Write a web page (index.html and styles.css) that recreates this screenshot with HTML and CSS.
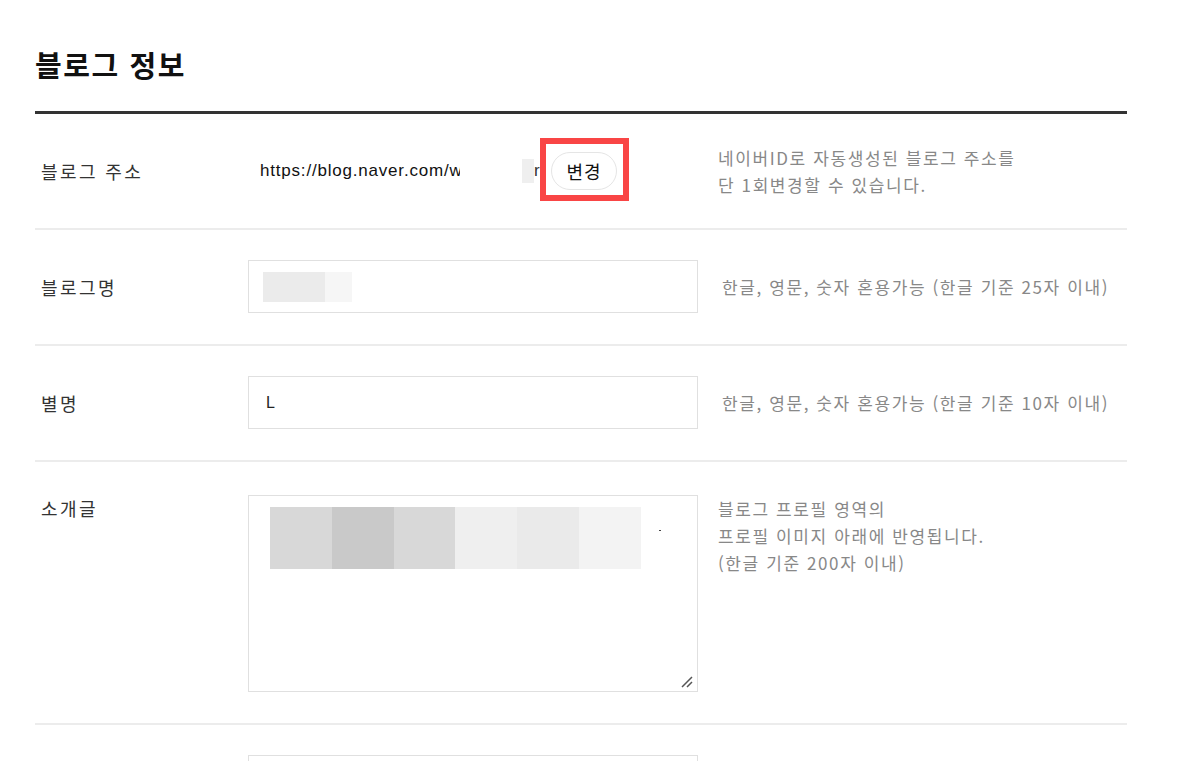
FILE: index.html
```html
<!DOCTYPE html>
<html lang="ko">
<head>
<meta charset="utf-8">
<title>블로그 정보</title>
<link rel="stylesheet" href="styles.css">
</head>
<body>
<main class="page">
  <h2 class="title">블로그 정보</h2>
  <div class="table">
    <div class="row center first">
      <div class="label">블로그 주소</div>
      <div class="field url-field">
        <span class="url">https://blog.naver.com/w</span>
        <span class="url-mask"></span>
        <span class="url-tail">r</span>
        <span class="btn-wrap">
          <button class="btn">변경</button>
          <span class="highlight"></span>
        </span>
      </div>
      <div class="help">네이버ID로 자동생성된 블로그 주소를<br>단 1회변경할 수 있습니다.</div>
    </div>
    <div class="row center">
      <div class="label">블로그명</div>
      <div class="field">
        <div class="input">
          <span class="mask m1"></span><span class="mask m2"></span>
        </div>
      </div>
      <div class="help wide">한글, 영문, 숫자 혼용가능 (한글 기준 25자 이내)</div>
    </div>
    <div class="row center">
      <div class="label">별명</div>
      <div class="field">
        <div class="input"><span class="value">L</span></div>
      </div>
      <div class="help wide">한글, 영문, 숫자 혼용가능 (한글 기준 10자 이내)</div>
    </div>
    <div class="row top">
      <div class="label">소개글</div>
      <div class="field">
        <div class="textarea">
          <div class="blur">
            <span class="tile t1"></span><span class="tile t2"></span><span class="tile t3"></span><span class="tile t4"></span><span class="tile t5"></span><span class="tile t6"></span>
          </div>
          <span class="dot"></span>
          <svg class="grip" width="12" height="12" viewBox="0 0 12 12">
            <path d="M1 11 L11 1 M6 11 L11 6" stroke="#555" stroke-width="1.5" fill="none"/>
          </svg>
        </div>
      </div>
      <div class="help">블로그 프로필 영역의<br>프로필 이미지 아래에 반영됩니다.<br>(한글 기준 200자 이내)</div>
    </div>
    <div class="row top last">
      <div class="label"></div>
      <div class="field">
        <div class="input"></div>
      </div>
      <div class="help">프로필 이미지는 가로 161px 로 보여집니다.</div>
    </div>
  </div>
</main>
</body>
</html>
```
FILE: styles.css
```css
* { box-sizing: border-box; }
html, body { margin: 0; padding: 0; background: #fff; }
body {
  font-family: "Noto Sans CJK KR", "Noto Sans", sans-serif;
  color: #333;
  overflow: hidden;
}
.page {
  width: 1092px;
  margin-left: 35px;
}
.title {
  margin: 0;
  padding-top: 44px;
  font-size: 29px;
  line-height: 40px;
  font-weight: 700;
  color: #111;
  letter-spacing: 1.6px;
  border-bottom: 3px solid #333;
  height: 114px;
}
.row {
  display: flex;
  border-bottom: 2px solid #ececec;
  padding: 30px 0 31px;
}
.row.center { align-items: center; }
.row.first { height: 116px; padding: 0; }
.row.top { align-items: flex-start; padding-top: 33px; }
.row.last { padding-top: 30px; }
.label {
  width: 213px;
  flex: none;
  padding-left: 6px;
  font-size: 18px;
  letter-spacing: 2.4px;
  color: #333;
}
.row.top .label { line-height: 26px; }
.field {
  width: 450px;
  flex: none;
}
.url-field {
  display: flex;
  align-items: center;
  padding-left: 12px;
  font-family: "Liberation Sans", "Noto Sans CJK KR", sans-serif;
  font-size: 17px;
  color: #111;
}
.url {
  width: 200px;
  overflow: hidden;
  white-space: nowrap;
  letter-spacing: 0.8px;
}
.url-mask {
  margin-left: 62px;
  width: 12px;
  height: 24px;
  background: #efefef;
}
.url-tail { width: 6px; overflow: hidden; color: #333; }
.btn-wrap {
  position: relative;
  margin-left: 11px;
  display: inline-flex;
}
.btn {
  width: 66px;
  height: 38px;
  border: 1px solid #e5e5e5;
  border-radius: 19px;
  background: #fff;
  font-family: "Noto Sans CJK KR", sans-serif;
  font-size: 18px;
  letter-spacing: 1px;
  color: #111;
  padding: 0;
  cursor: pointer;
}
.highlight {
  position: absolute;
  left: -11px;
  top: -14px;
  width: 89px;
  height: 63px;
  border: 6px solid #f94545;
  pointer-events: none;
}
.help {
  padding-left: 20px;
  font-size: 17px;
  line-height: 27px;
  color: #888;
  letter-spacing: 1.6px;
  white-space: nowrap;
}
.help.wide { padding-left: 24px; }
.input {
  position: relative;
  height: 53px;
  border: 1px solid #e0e0e0;
  display: flex;
  align-items: center;
  padding-left: 14px;
}
.mask { height: 30px; }
.m1 { width: 62px; background: #ebebeb; }
.m2 { width: 27px; background: #f6f6f6; }
.value {
  font-size: 16px;
  color: #222;
  padding-left: 3px;
  font-family: "Liberation Sans", sans-serif;
}
.textarea {
  position: relative;
  height: 197px;
  border: 1px solid #e0e0e0;
  padding: 11px 0 0 21px;
}
.blur { display: flex; }
.tile { width: 62px; height: 62px; }
.t1 { background: #d8d8d8; }
.t2 { background: #c9c9c9; }
.t3 { background: #d8d8d8; width: 61px; }
.t4 { background: #efefef; }
.t5 { background: #eaeaea; }
.t6 { background: #f3f3f3; }
.dot {
  position: absolute;
  left: 410px;
  top: 34px;
  width: 2px;
  height: 1px;
  background: #444;
}
.grip {
  position: absolute;
  right: 4px;
  bottom: 3px;
}
```
